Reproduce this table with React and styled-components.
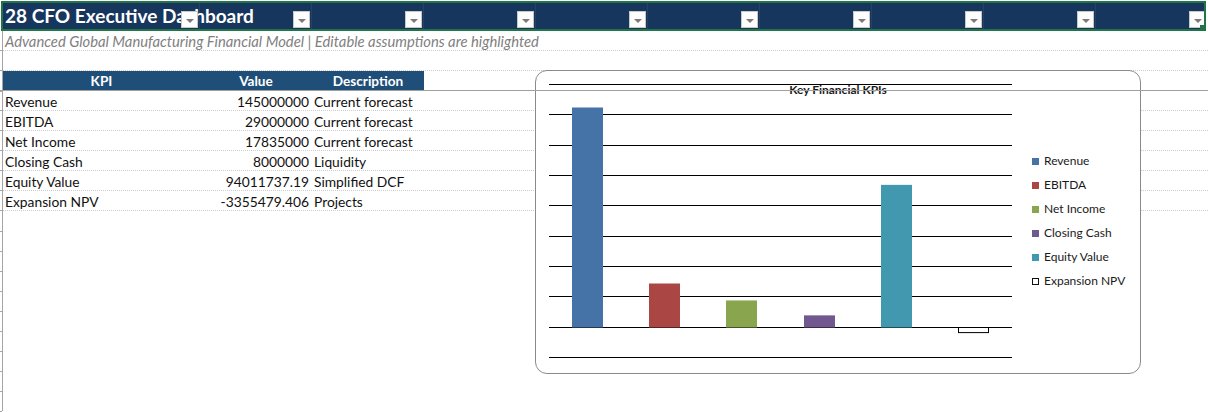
import React from 'react'
import styled, { createGlobalStyle } from 'styled-components'

const GlobalStyle = createGlobalStyle`
    body {
        margin: 0;
        background: #fff;
        font-family: Lato, "Open Sans", sans-serif;
    }
`

const kpis = [
    { label: 'Revenue', value: 145000000, text: '145000000', note: 'Current forecast', color: '#4572a7' },
    { label: 'EBITDA', value: 29000000, text: '29000000', note: 'Current forecast', color: '#aa4643' },
    { label: 'Net Income', value: 17835000, text: '17835000', note: 'Current forecast', color: '#89a54e' },
    { label: 'Closing Cash', value: 8000000, text: '8000000', note: 'Liquidity', color: '#71588f' },
    { label: 'Equity Value', value: 94011737.19, text: '94011737.19', note: 'Simplified DCF', color: '#4198af' },
    { label: 'Expansion NPV', value: -3355479.406, text: '-3355479.406', note: 'Projects', color: '#fff', outline: true },
]

const COLS = [197, 112, 112]

const Page = styled.div`
    position: relative;
    width: 1208px;
    height: 412px;
    overflow: hidden;
`

// Title band (row 1), currently selected
const TitleBar = styled.div`
    position: relative;
    margin: 1px 0 0 1px;
    width: 1205px;
    height: 30px;
    box-sizing: border-box;
    border: 2px solid #227346;
    background: #17365d;
    display: grid;
    grid-template-columns: 197px repeat(9, 112px);
    overflow: hidden;
`
const Handle = styled.div`
    position: absolute;
    right: 0;
    bottom: 0;
    width: 4px;
    height: 4px;
    background: #227346;
    z-index: 3;
`
const TitleCell = styled.div`
    position: relative;
    display: flex;
    justify-content: flex-end;
    align-items: flex-end;
    padding: 0 1px 1px 0;
    border-right: 1px solid rgba(255,255,255,0.06);
`
const TitleText = styled.span`
    position: absolute;
    left: 2px;
    top: 2px;
    color: #fff;
    font-weight: 700;
    font-size: 19px;
    line-height: 22px;
    white-space: nowrap;
`
const Dropdown = styled.div`
    position: relative;
    z-index: 1;
    width: 15px;
    height: 15px;
    background: #fdfdfd;
    border: 1px solid #c8c8c8;
    display: flex;
    align-items: center;
    justify-content: center;
    &::after {
        content: '';
        margin-top: 2px;
        border-left: 4px solid transparent;
        border-right: 4px solid transparent;
        border-top: 4px solid #7a7a7a;
    }
`

const Sheet = styled.div`
    margin-left: 2px;
    border-left: 1px solid #a5a5a5;
`
const Row = styled.div`
    position: relative;
    display: flex;
    height: 20px;
    box-sizing: border-box;
    border-bottom: ${p => (p.$lined ? '1px dotted #cdcdcd' : 'none')};
    &::before {
        content: '';
        position: absolute;
        left: -3px;
        bottom: -1px;
        width: 2px;
        height: 1px;
        background: #a5a5a5;
    }
`
const Subtitle = styled.div`
    padding-left: 2px;
    font-style: italic;
    font-size: 14.8px;
    line-height: 20px;
    color: #7f7f7f;
    white-space: nowrap;
`
const HeadCell = styled.div`
    width: ${p => p.$w}px;
    background: #1f4e79;
    color: #fff;
    font-weight: 700;
    font-size: 13.6px;
    line-height: 20px;
    text-align: center;
`
const Cell = styled.div`
    width: ${p => p.$w}px;
    box-sizing: border-box;
    padding: 0 ${p => (p.$right ? '3px' : '0')} 0 ${p => (p.$right ? '0' : '2px')};
    text-align: ${p => (p.$right ? 'right' : 'left')};
    font-size: 13.8px;
    line-height: 21px;
    color: #111;
    white-space: nowrap;
`

const FreezeLine = styled.div`
    position: absolute;
    left: 0;
    right: 0;
    top: 90px;
    height: 1px;
    background: #a0a0a0;
    z-index: 5;
`

// Floating chart object
const Chart = styled.div`
    position: absolute;
    left: 535px;
    top: 70px;
    width: 606px;
    height: 304px;
    box-sizing: border-box;
    border: 1px solid #8a8a8a;
    border-radius: 12px;
    background: #fff;
    display: flex;
    align-items: center;
    padding: 0 0 0 13px;
    z-index: 2;
`
const ChartTitle = styled.div`
    position: absolute;
    left: 0;
    right: 0;
    top: 12px;
    text-align: center;
    font-weight: 700;
    font-size: 12px;
    line-height: 14px;
    color: #1a1a1a;
`
const Plot = styled.svg`
    align-self: flex-start;
    margin-top: 13px;
    flex: none;
`
const Legend = styled.div`
    display: flex;
    flex-direction: column;
    gap: 10px;
    margin-left: 20px;
    margin-top: -2px;
`
const LegendItem = styled.div`
    display: flex;
    align-items: center;
    gap: 5px;
    font-size: 12px;
    line-height: 14px;
    color: #1a1a1a;
    white-space: nowrap;
`
const Swatch = styled.span`
    width: 7px;
    height: 7px;
    box-sizing: border-box;
    background: ${p => p.$color};
    border: ${p => (p.$outline ? '1px solid #111' : 'none')};
`

const PLOT_W = 463
const PLOT_H = 275
const STEP = 30.33
const ZERO = Math.round(8 * STEP) + 0.5
const SCALE = 220 / 145000000

const KpiChart = () => {
    const slot = PLOT_W / kpis.length
    return (
        <Chart>
            <ChartTitle>Key Financial KPIs</ChartTitle>
            <Plot width={PLOT_W} height={PLOT_H}>
                {Array.from({ length: 10 }, (_, i) => {
                    const y = Math.round(i * STEP) + 0.5
                    return <line key={i} x1={0} x2={PLOT_W} y1={y} y2={y} stroke="#000" strokeWidth={1} />
                })}
                {kpis.map((k, i) => {
                    const h = Math.abs(k.value) * SCALE
                    const x = Math.round(i * slot + 23)
                    const y = k.value >= 0 ? ZERO - h : ZERO
                    return (
                        <rect
                            key={k.label}
                            x={k.outline ? x + 0.5 : x}
                            y={y}
                            width={k.outline ? 30 : 31}
                            height={h}
                            fill={k.color}
                            stroke={k.outline ? '#000' : 'none'}
                            strokeWidth={1}
                        />
                    )
                })}
            </Plot>
            <Legend>
                {kpis.map(k => (
                    <LegendItem key={k.label}>
                        <Swatch $color={k.color} $outline={k.outline} />
                        {k.label}
                    </LegendItem>
                ))}
            </Legend>
        </Chart>
    )
}

const App = () => {
    return (
        <Page>
            <GlobalStyle />
            <TitleBar>
                {Array.from({ length: 10 }, (_, i) => (
                    <TitleCell key={i}>
                        {i === 0 && <TitleText>28 CFO Executive Dashboard</TitleText>}
                        <Dropdown />
                    </TitleCell>
                ))}
                <Handle />
            </TitleBar>
            <Sheet>
                <Row $lined>
                    <Subtitle>Advanced Global Manufacturing Financial Model | Editable assumptions are highlighted</Subtitle>
                </Row>
                <Row $lined />
                <Row>
                    <HeadCell $w={COLS[0]}>KPI</HeadCell>
                    <HeadCell $w={COLS[1]}>Value</HeadCell>
                    <HeadCell $w={COLS[2]}>Description</HeadCell>
                </Row>
                {kpis.map(k => (
                    <Row $lined key={k.label}>
                        <Cell $w={COLS[0]}>{k.label}</Cell>
                        <Cell $w={COLS[1]} $right>{k.text}</Cell>
                        <Cell $w={COLS[2]}>{k.note}</Cell>
                    </Row>
                ))}
                {Array.from({ length: 10 }, (_, i) => (
                    <Row key={'e' + i} />
                ))}
            </Sheet>
            <FreezeLine />
            <KpiChart />
        </Page>
    )
}

export default App
